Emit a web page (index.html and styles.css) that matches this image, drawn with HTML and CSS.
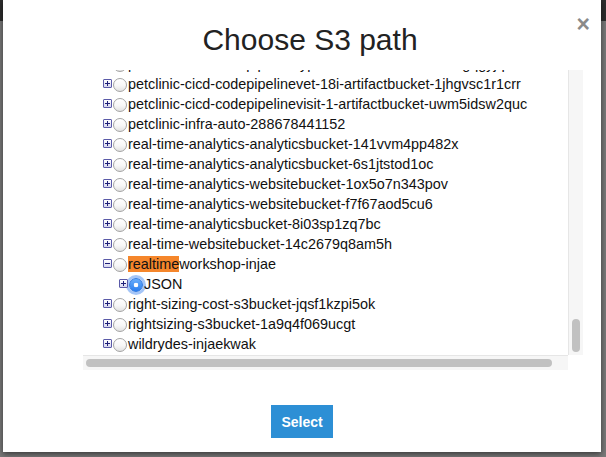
FILE: index.html
```html
<!DOCTYPE html>
<html>
<head>
<meta charset="utf-8">
<title>Choose S3 path</title>
<link rel="stylesheet" href="styles.css">
</head>
<body>
<div class="modal">
  <div class="modal-header">
    <span class="spacer"></span>
    <h3 class="modal-title">Choose S3 path</h3>
    <button class="close" type="button">×</button>
  </div>
  <div class="tree-frame">
    <div class="tree-view">
      <ul class="tree">
        <li class="node"><span class="exp plus"></span><span class="radio"></span><span class="label">petclinic-cicd-codepipelinetypes-13-artifactbucket-1ogqgyjq4</span></li>
        <li class="node"><span class="exp plus"></span><span class="radio"></span><span class="label">petclinic-cicd-codepipelinevet-18i-artifactbucket-1jhgvsc1r1crr</span></li>
        <li class="node"><span class="exp plus"></span><span class="radio"></span><span class="label">petclinic-cicd-codepipelinevisit-1-artifactbucket-uwm5idsw2quc</span></li>
        <li class="node"><span class="exp plus"></span><span class="radio"></span><span class="label">petclinic-infra-auto-288678441152</span></li>
        <li class="node"><span class="exp plus"></span><span class="radio"></span><span class="label">real-time-analytics-analyticsbucket-141vvm4pp482x</span></li>
        <li class="node"><span class="exp plus"></span><span class="radio"></span><span class="label">real-time-analytics-analyticsbucket-6s1jtstod1oc</span></li>
        <li class="node"><span class="exp plus"></span><span class="radio"></span><span class="label">real-time-analytics-websitebucket-1ox5o7n343pov</span></li>
        <li class="node"><span class="exp plus"></span><span class="radio"></span><span class="label">real-time-analytics-websitebucket-f7f67aod5cu6</span></li>
        <li class="node"><span class="exp plus"></span><span class="radio"></span><span class="label">real-time-analyticsbucket-8i03sp1zq7bc</span></li>
        <li class="node"><span class="exp plus"></span><span class="radio"></span><span class="label">real-time-websitebucket-14c2679q8am5h</span></li>
        <li class="node"><span class="exp minus"></span><span class="radio"></span><span class="label"><mark class="hit">realtime</mark>workshop-injae</span></li>
        <li class="node child"><span class="exp plus"></span><span class="radio checked"></span><span class="label">JSON</span></li>
        <li class="node"><span class="exp plus"></span><span class="radio"></span><span class="label">right-sizing-cost-s3bucket-jqsf1kzpi5ok</span></li>
        <li class="node"><span class="exp plus"></span><span class="radio"></span><span class="label">rightsizing-s3bucket-1a9q4f069ucgt</span></li>
        <li class="node"><span class="exp plus"></span><span class="radio"></span><span class="label">wildrydes-injaekwak</span></li>
      </ul>
    </div>
    <div class="vscroll"><div class="vthumb"></div></div>
    <div class="hscroll"><div class="hthumb"></div></div>
    <div class="corner"></div>
  </div>
  <div class="modal-footer">
    <button class="btn-select" type="button">Select</button>
  </div>
</div>
</body>
</html>
```

FILE: styles.css
```css
html, body {
  margin: 0;
  padding: 0;
}

body {
  width: 606px;
  height: 457px;
  overflow: hidden;
  background: linear-gradient(to bottom, #2d2d2d 0, #2d2d2d 21px, #797979 21px, #797979 100%);
  font-family: "Liberation Sans", Arial, Helvetica, sans-serif;
  color: #222;
}

.modal {
  margin: 0 5px 0 3px;
  height: 452px;
  background: #fff;
  box-shadow: 0 2px 6px rgba(0, 0, 0, 0.55);
  display: flex;
  flex-direction: column;
}

.modal-header {
  display: grid;
  grid-template-columns: 1fr auto 1fr;
  height: 70px;
  box-sizing: border-box;
  padding: 23px 0 0 16px;
}

.modal-title {
  margin: 0;
  font-size: 30px;
  line-height: 34px;
  font-weight: normal;
  color: #222;
}

.close {
  justify-self: end;
  align-self: start;
  margin: -10px 11px 0 0;
  padding: 0;
  border: 0;
  background: none;
  font-family: "Liberation Sans", Arial, sans-serif;
  font-size: 23px;
  font-weight: bold;
  line-height: 22px;
  color: #8a8a8a;
}

.tree-frame {
  margin-left: 80px;
  display: grid;
  grid-template-columns: 485px 15px;
  grid-template-rows: 285px 15px;
  width: 500px;
}

.tree-view {
  overflow: hidden;
}

.tree {
  list-style: none;
  margin: -16px 0 0 0;
  padding: 0 0 0 20px;
  white-space: nowrap;
  font-size: 14.4px;
}

.node {
  display: flex;
  align-items: flex-start;
  height: 20px;
  line-height: 20px;
}

.node.child {
  padding-left: 16px;
}

.exp {
  flex: none;
  position: relative;
  width: 7px;
  height: 7px;
  margin-top: 5px;
  border: 1px solid #5a5aa8;
  border-radius: 1px;
  background: linear-gradient(to bottom, #ffffff, #d6d6ee);
}

.exp::before {
  content: "";
  position: absolute;
  left: 1px;
  top: 3px;
  width: 5px;
  height: 1px;
  background: #1e1e78;
}

.exp.plus::after {
  content: "";
  position: absolute;
  left: 3px;
  top: 1px;
  width: 1px;
  height: 5px;
  background: #1e1e78;
}

.radio {
  flex: none;
  box-sizing: border-box;
  width: 14px;
  height: 14px;
  margin: 4px 1px 0 1px;
  border: 1px solid #a4a4a4;
  border-radius: 50%;
  background: linear-gradient(to bottom, #ffffff 0%, #f7f7f7 55%, #e2e2e2 100%);
}

.radio.checked {
  border-color: #2f78e0;
  background: radial-gradient(circle at 50% 50%, #ffffff 0, #ffffff 2px, rgba(255,255,255,0) 2.6px),
              linear-gradient(to bottom, #6aaefa, #2a7ff0);
  box-shadow: 0 0 0 3px rgba(90, 150, 240, 0.55);
}

.label {
  color: #111;
}

.hit {
  background: #f5862b;
  color: #111;
  padding: 0;
}

.vscroll {
  grid-column: 2;
  grid-row: 1;
  background: #f6f6f6;
  border-left: 1px solid #e6e6e6;
  display: flex;
  flex-direction: column;
  justify-content: flex-end;
  padding: 0 0 3px 3px;
}

.vthumb {
  width: 8px;
  height: 33px;
  border-radius: 4px;
  background: #c1c1c1;
}

.hscroll {
  grid-column: 1;
  grid-row: 2;
  background: #f6f6f6;
  border-top: 1px solid #e6e6e6;
  padding: 3px 0 0 3px;
}

.hthumb {
  width: 466px;
  height: 8px;
  border-radius: 4px;
  background: #c1c1c1;
}

.corner {
  grid-column: 2;
  grid-row: 2;
  background: #fff;
}

.modal-footer {
  display: flex;
  justify-content: center;
  padding-top: 35px;
}

.btn-select {
  width: 62px;
  height: 33px;
  border: 0;
  border-radius: 0;
  background: #2d8fd5;
  color: #fff;
  font-family: "Liberation Sans", Arial, sans-serif;
  font-size: 14px;
  font-weight: bold;
  padding: 0;
}
```
